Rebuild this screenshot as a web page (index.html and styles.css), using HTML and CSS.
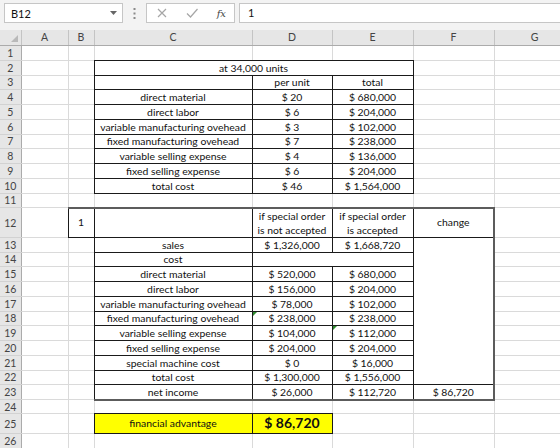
FILE: index.html
```html
<!DOCTYPE html>
<html>
<head>
<meta charset="utf-8">
<title>Special order analysis</title>
<link rel="stylesheet" href="styles.css">
</head>
<body>
<div class="formula-bar">
  <div class="name-box">
    <span>B12</span>
    <svg class="caret" width="7" height="4" viewBox="0 0 7 4"><path d="M0 0h7L3.5 4z" fill="#666"/></svg>
  </div>
  <svg class="grip" width="3" height="11" viewBox="0 0 3 11">
    <rect x="0.5" y="0" width="2" height="2" fill="#8a8a8a"/>
    <rect x="0.5" y="4.5" width="2" height="2" fill="#8a8a8a"/>
    <rect x="0.5" y="9" width="2" height="2" fill="#8a8a8a"/>
  </svg>
  <div class="fx-buttons">
    <svg width="10" height="10" viewBox="0 0 10 10"><path d="M1 1l8 8M9 1l-8 8" stroke="#a6a6a6" stroke-width="1.2" fill="none"/></svg>
    <svg width="12" height="10" viewBox="0 0 12 10"><path d="M1 5.5l3.5 3.5 7-8" stroke="#a6a6a6" stroke-width="1.2" fill="none"/></svg>
    <span class="fx">fx</span>
  </div>
  <div class="formula-input">1</div>
</div>

<table class="sheet">
  <colgroup>
    <col class="c-rh"><col class="c-a"><col class="c-b"><col class="c-c"><col class="c-d"><col class="c-e"><col class="c-f"><col class="c-g">
  </colgroup>
  <thead>
    <tr><th class="corner"></th><th>A</th><th>B</th><th>C</th><th>D</th><th>E</th><th>F</th><th>G</th></tr>
  </thead>
  <tbody>
    <tr><th>1</th><td></td><td></td><td></td><td></td><td></td><td></td><td></td></tr>
    <tr><th>2</th><td></td><td></td><td class="bx" colspan="3">at 34,000 units</td><td></td><td></td></tr>
    <tr><th>3</th><td></td><td></td><td class="bx"></td><td class="bx">per unit</td><td class="bx">total</td><td></td><td></td></tr>
    <tr><th>4</th><td></td><td></td><td class="bx">direct material</td><td class="bx">$ 20</td><td class="bx">$ 680,000</td><td></td><td></td></tr>
    <tr><th>5</th><td></td><td></td><td class="bx">direct labor</td><td class="bx">$ 6</td><td class="bx">$ 204,000</td><td></td><td></td></tr>
    <tr><th>6</th><td></td><td></td><td class="bx">variable manufacturing ovehead</td><td class="bx">$ 3</td><td class="bx">$ 102,000</td><td></td><td></td></tr>
    <tr><th>7</th><td></td><td></td><td class="bx">fixed manufacturing ovehead</td><td class="bx">$ 7</td><td class="bx">$ 238,000</td><td></td><td></td></tr>
    <tr><th>8</th><td></td><td></td><td class="bx">variable selling expense</td><td class="bx">$ 4</td><td class="bx">$ 136,000</td><td></td><td></td></tr>
    <tr><th>9</th><td></td><td></td><td class="bx">fixed selling expense</td><td class="bx">$ 6</td><td class="bx">$ 204,000</td><td></td><td></td></tr>
    <tr><th>10</th><td></td><td></td><td class="bx">total cost</td><td class="bx">$ 46</td><td class="bx">$ 1,564,000</td><td></td><td></td></tr>
    <tr><th>11</th><td></td><td></td><td></td><td></td><td></td><td></td><td></td></tr>
    <tr class="tall"><th>12</th><td></td><td class="bx top-heavy mid">1</td><td class="bx top-heavy"></td><td class="bx top-heavy wrap">if special order<br>is not accepted</td><td class="bx top-heavy wrap">if special order<br>is accepted</td><td class="bx top-heavy right-heavy mid">change</td><td></td></tr>
    <tr><th>13</th><td></td><td></td><td class="bx">sales</td><td class="bx">$ 1,326,000</td><td class="bx">$ 1,668,720</td><td class="bx right-heavy" rowspan="10"></td><td></td></tr>
    <tr><th>14</th><td></td><td></td><td class="bx">cost</td><td class="bx" colspan="2"></td><td></td></tr>
    <tr><th>15</th><td></td><td></td><td class="bx">direct material</td><td class="bx">$ 520,000</td><td class="bx">$ 680,000</td><td></td></tr>
    <tr><th>16</th><td></td><td></td><td class="bx">direct labor</td><td class="bx">$ 156,000</td><td class="bx">$ 204,000</td><td></td></tr>
    <tr><th>17</th><td></td><td></td><td class="bx">variable manufacturing ovehead</td><td class="bx">$ 78,000</td><td class="bx">$ 102,000</td><td></td></tr>
    <tr><th>18</th><td></td><td></td><td class="bx">fixed manufacturing ovehead</td><td class="bx flag">$ 238,000</td><td class="bx">$ 238,000</td><td></td></tr>
    <tr><th>19</th><td></td><td></td><td class="bx">variable selling expense</td><td class="bx">$ 104,000</td><td class="bx flag">$ 112,000</td><td></td></tr>
    <tr><th>20</th><td></td><td></td><td class="bx">fixed selling expense</td><td class="bx">$ 204,000</td><td class="bx">$ 204,000</td><td></td></tr>
    <tr><th>21</th><td></td><td></td><td class="bx">special machine cost</td><td class="bx">$ 0</td><td class="bx">$ 16,000</td><td></td></tr>
    <tr><th>22</th><td></td><td></td><td class="bx">total cost</td><td class="bx">$ 1,300,000</td><td class="bx">$ 1,556,000</td><td></td></tr>
    <tr><th>23</th><td></td><td></td><td class="bx bottom-heavy">net income</td><td class="bx bottom-heavy">$ 26,000</td><td class="bx bottom-heavy">$ 112,720</td><td class="bx bottom-heavy right-heavy">$ 86,720</td><td></td></tr>
    <tr class="short"><th>24</th><td></td><td></td><td></td><td></td><td></td><td></td><td></td></tr>
    <tr class="total-row"><th>25</th><td></td><td></td><td class="bx highlight">financial advantage</td><td class="bx highlight big">$ 86,720</td><td></td><td></td><td></td></tr>
    <tr><th>26</th><td></td><td></td><td></td><td></td><td></td><td></td><td></td></tr>
  </tbody>
</table>
</body>
</html>
```

FILE: styles.css
```css
body {
  margin: 0;
  padding: 0;
  background: white;
  font-family: Lato, "Liberation Sans", sans-serif;
  color: #111;
  overflow: hidden;
}

/* Name box, buttons and formula input above the grid */
.formula-bar {
  display: flex;
  align-items: flex-start;
  height: 30px;
  padding: 3px 0 0 4px;
  box-sizing: border-box;
  background: #f3f3f3;
}
.name-box {
  display: flex;
  align-items: center;
  justify-content: space-between;
  width: 119px;
  height: 20px;
  padding: 0 5px 0 6px;
  box-sizing: border-box;
  background: white;
  border: 1px solid #c6c6c6;
  font-size: 11px;
}
.grip {
  margin: 5px 10px 0 10px;
}
.fx-buttons {
  display: flex;
  align-items: center;
  justify-content: space-between;
  width: 89px;
  height: 20px;
  padding: 0 8px 0 10px;
  box-sizing: border-box;
  background: white;
  border: 1px solid #c6c6c6;
}
.fx {
  font-family: "DejaVu Serif", serif;
  font-style: italic;
  font-size: 10px;
  color: #444;
}
.formula-input {
  flex: 1;
  height: 20px;
  margin-left: 4px;
  padding-left: 8px;
  box-sizing: border-box;
  background: white;
  border: 1px solid #c6c6c6;
  border-right: none;
  font-size: 11px;
  line-height: 18px;
}

/* The worksheet grid */
.sheet {
  table-layout: fixed;
  border-collapse: collapse;
  width: 575px;
  font-size: 10.4px;
}
.sheet col {
  border-right: 1px solid #dadada;
}
.sheet tbody tr {
  height: 14.75px;
  border-bottom: 1px solid #dadada;
}
.sheet tbody tr.tall {
  height: 29.5px;
}
.sheet tbody tr.short {
  height: 14px;
}
.sheet tbody tr.total-row {
  height: 20px;
}
.c-rh { width: 21px; }
.c-a { width: 47px; }
.c-b { width: 26px; }
.c-c { width: 158px; }
.c-d { width: 80px; }
.c-e { width: 81px; }
.c-f { width: 81px; }
.c-g { width: 81px; }

.sheet th {
  background: #e6e6e6;
  color: #444;
  font-weight: normal;
  font-size: 10.5px;
  padding: 0;
}
.sheet thead th {
  height: 15px;
  border-right: 1px solid #c4c4c4;
  border-bottom: 1px solid #ababab;
  line-height: 13px;
}
.sheet thead th.corner {
  position: relative;
}
.sheet thead th.corner::after {
  content: "";
  position: absolute;
  right: 3px;
  bottom: 3px;
  border-style: solid;
  border-width: 0 0 7px 7px;
  border-color: transparent transparent #b9b9b9 transparent;
}
.sheet tbody th {
  border-right: 1px solid #ababab;
  border-bottom: 1px solid #d2d2d2;
  line-height: 12px;
}
.sheet td {
  padding: 0 0 1px 0;
  text-align: center;
  vertical-align: bottom;
  line-height: 12px;
  white-space: nowrap;
}
.sheet td.wrap {
  padding: 0;
  line-height: 14px;
}
.sheet td.mid,
.sheet tr.total-row td {
  vertical-align: middle;
}

/* Bordered cells */
.sheet td.bx {
  border: 1px solid #1a1a1a;
}
.sheet td.top-heavy {
  border-top: 2px solid #5c5c5c;
}
.sheet td.bottom-heavy {
  border-bottom: 2px solid #5c5c5c;
}
.sheet td.right-heavy {
  border-right: 2px solid #5c5c5c;
}
.sheet td.highlight {
  background: #ffff00;
}
.sheet td.big {
  font-weight: bold;
  font-size: 14px;
  line-height: 16px;
}

/* Excel's green "number stored as text" marker */
.sheet td.flag {
  position: relative;
}
.sheet td.flag::before {
  content: "";
  position: absolute;
  left: 0;
  top: 0;
  border-style: solid;
  border-width: 4px 4px 0 0;
  border-color: #2f8a2f transparent transparent transparent;
}
```
